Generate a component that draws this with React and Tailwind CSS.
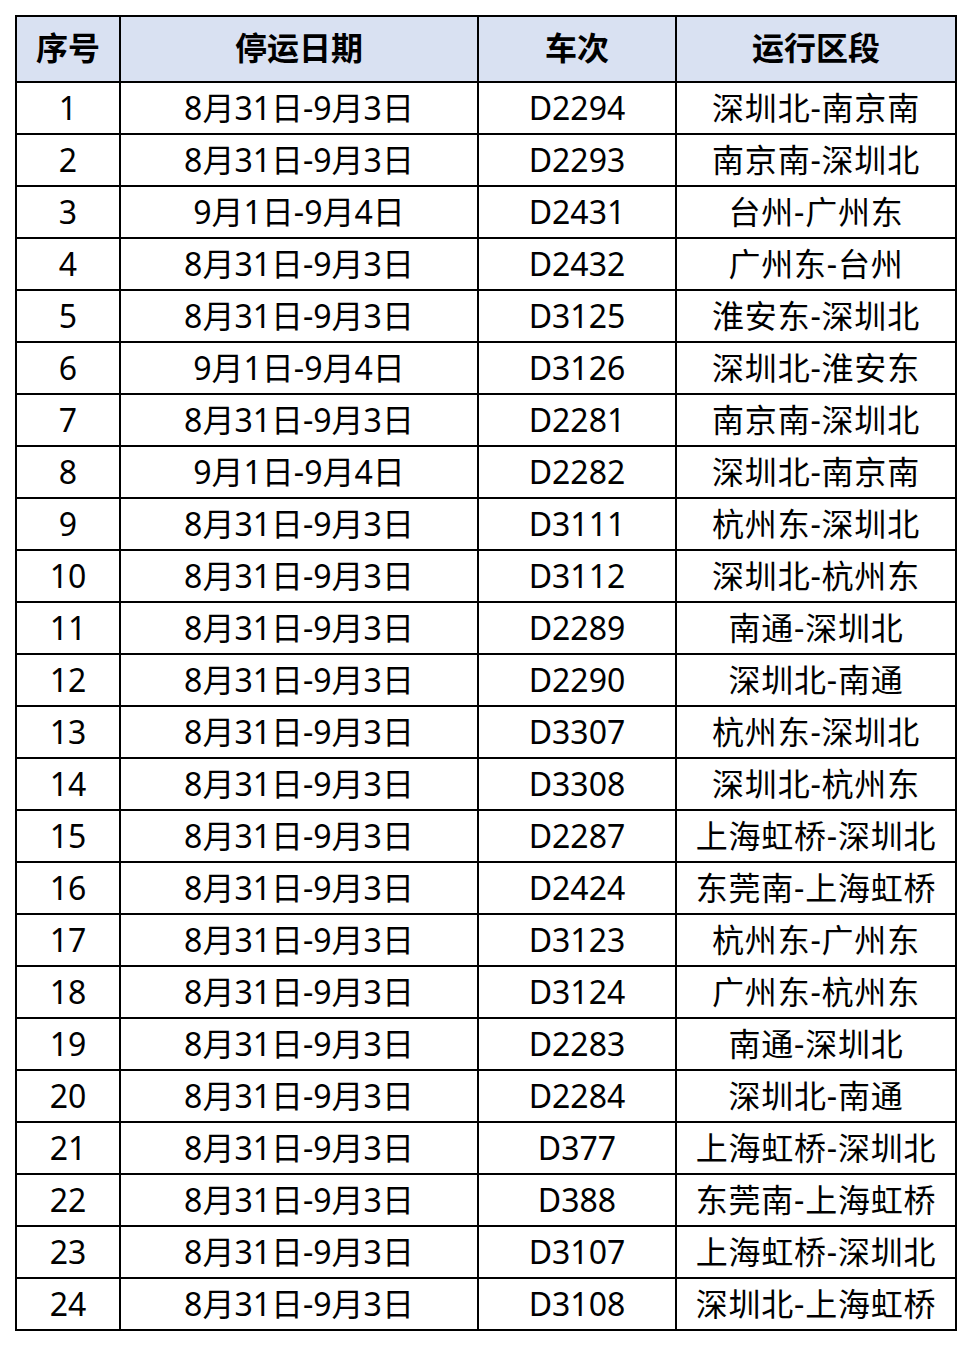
import React from "react";

const rows = [
  ["1", "8月31日-9月3日", "D2294", "深圳北-南京南"],
  ["2", "8月31日-9月3日", "D2293", "南京南-深圳北"],
  ["3", "9月1日-9月4日", "D2431", "台州-广州东"],
  ["4", "8月31日-9月3日", "D2432", "广州东-台州"],
  ["5", "8月31日-9月3日", "D3125", "淮安东-深圳北"],
  ["6", "9月1日-9月4日", "D3126", "深圳北-淮安东"],
  ["7", "8月31日-9月3日", "D2281", "南京南-深圳北"],
  ["8", "9月1日-9月4日", "D2282", "深圳北-南京南"],
  ["9", "8月31日-9月3日", "D3111", "杭州东-深圳北"],
  ["10", "8月31日-9月3日", "D3112", "深圳北-杭州东"],
  ["11", "8月31日-9月3日", "D2289", "南通-深圳北"],
  ["12", "8月31日-9月3日", "D2290", "深圳北-南通"],
  ["13", "8月31日-9月3日", "D3307", "杭州东-深圳北"],
  ["14", "8月31日-9月3日", "D3308", "深圳北-杭州东"],
  ["15", "8月31日-9月3日", "D2287", "上海虹桥-深圳北"],
  ["16", "8月31日-9月3日", "D2424", "东莞南-上海虹桥"],
  ["17", "8月31日-9月3日", "D3123", "杭州东-广州东"],
  ["18", "8月31日-9月3日", "D3124", "广州东-杭州东"],
  ["19", "8月31日-9月3日", "D2283", "南通-深圳北"],
  ["20", "8月31日-9月3日", "D2284", "深圳北-南通"],
  ["21", "8月31日-9月3日", "D377", "上海虹桥-深圳北"],
  ["22", "8月31日-9月3日", "D388", "东莞南-上海虹桥"],
  ["23", "8月31日-9月3日", "D3107", "上海虹桥-深圳北"],
  ["24", "8月31日-9月3日", "D3108", "深圳北-上海虹桥"],
];

const headers = ["序号", "停运日期", "车次", "运行区段"];

export default function App() {
  return (
    <div
      className="w-[970px] h-[1346px] bg-white pt-[15px] pl-[15px] text-black"
      style={{ fontFamily: '"Noto Sans", "Noto Sans CJK SC", sans-serif' }}
    >
      <table className="w-[940px] table-fixed border-collapse border-2 border-black text-[32px]">
        <colgroup>
          <col className="w-[104px]" />
          <col className="w-[358px]" />
          <col className="w-[198px]" />
          <col className="w-[280px]" />
        </colgroup>
        <thead>
          <tr className="h-[66px] bg-[#d9e1f2]">
            {headers.map((h) => (
              <th
                key={h}
                className="border-2 border-black p-0 pb-[2px] text-center align-middle font-bold leading-none"
              >
                {h}
              </th>
            ))}
          </tr>
        </thead>
        <tbody>
          {rows.map((r) => (
            <tr key={r[0]} className="h-[52px]">
              <td className="border-2 border-black p-0 text-center align-middle leading-none">
                {r[0]}
              </td>
              <td className="border-2 border-black p-0 text-center align-middle leading-none">
                {r[1]}
              </td>
              <td className="border-2 border-black p-0 text-center align-middle leading-none">
                {r[2]}
              </td>
              <td className="border-2 border-black p-0 text-center align-middle leading-none tracking-[0.8px]">
                {r[3]}
              </td>
            </tr>
          ))}
        </tbody>
      </table>
    </div>
  );
}
